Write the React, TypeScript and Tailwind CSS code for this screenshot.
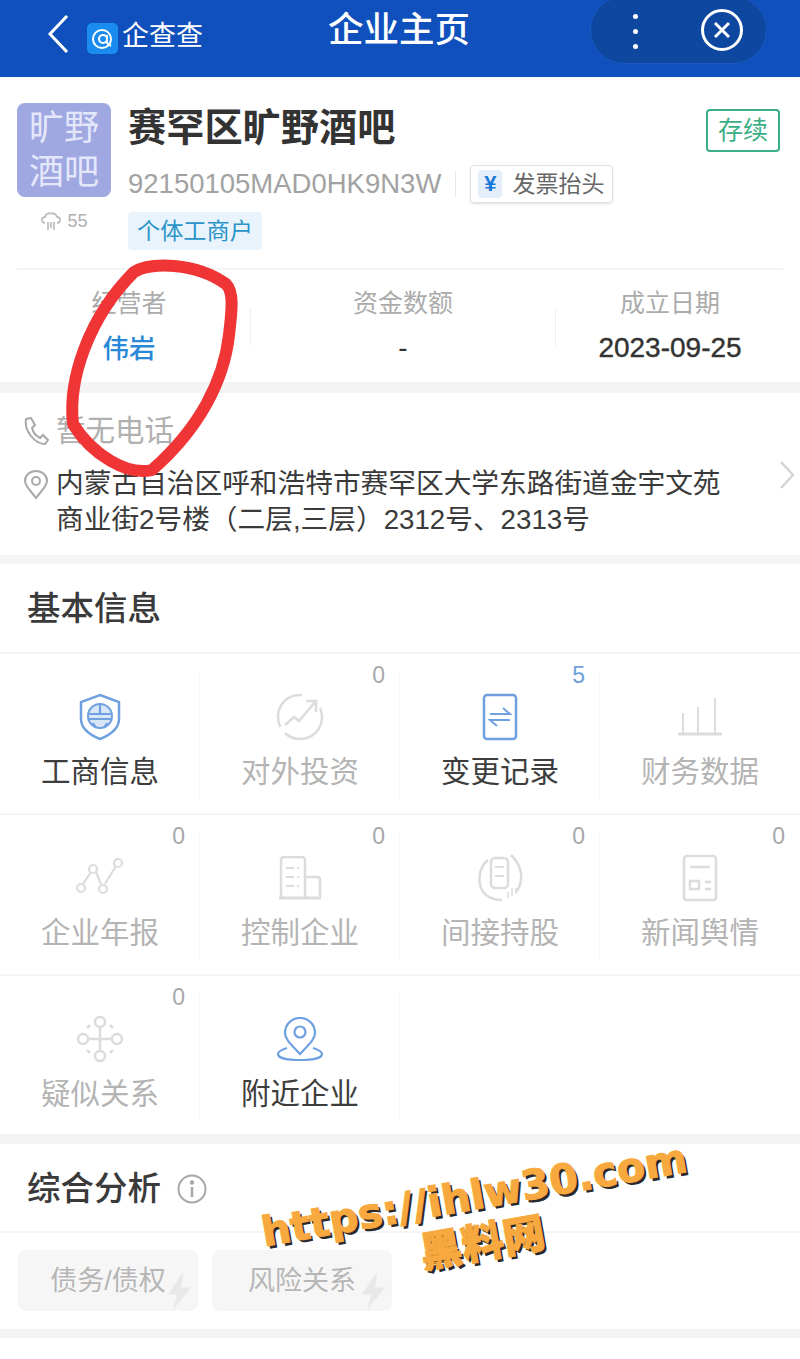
import { ReactNode } from 'react';

const FONT = "font-['Liberation_Sans','Noto_Sans_CJK_SC',sans-serif]";

function ShieldIcon() {
  return (
    <svg width="44" height="48" viewBox="0 0 44 48" fill="none" stroke="#6fa0e0" strokeWidth="2.5">
      <path d="M22 2 L41 9 V26 C41 36 32 42 22 46 C12 42 3 36 3 26 V9 Z" />
      <circle cx="22" cy="23" r="12" fill="#d8e6f8" strokeWidth="2" />
      <path d="M10 21 H34 M10 26 H34 M22 11 V21 M15 30 L18 35 M29 30 L26 35" strokeWidth="2.2" />
    </svg>
  );
}

function InvestIcon() {
  return (
    <svg width="48" height="48" viewBox="0 0 48 48" fill="none" stroke="#dcdcdc" strokeWidth="2.5">
      <path d="M26 2 C12 1 2 11 2 24 C2 28 3 31 4 34" />
      <path d="M44 15 C46 19 46 21 46 24 C46 37 36 46 24 46 C18 46 13 44 9 40" />
      <path d="M9 32 L18 24 L23 28 L39 9 M30 8 H40 V19" />
    </svg>
  );
}

function ChangeIcon() {
  return (
    <svg width="36" height="48" viewBox="0 0 36 48" fill="none" stroke="#6fa0e0" strokeWidth="2.5">
      <rect x="2" y="2" width="32" height="44" rx="3" />
      <path d="M8 21 H28 L21 15 M28 27 H8 L15 33" strokeWidth="2" />
    </svg>
  );
}

function FinanceIcon() {
  return (
    <svg width="46" height="40" viewBox="0 0 46 40" fill="none" stroke="#dcdcdc" strokeWidth="2">
      <path d="M1 37 H45" strokeWidth="3" />
      <path d="M6 36 V16 M21 36 V10 M38 36 V1" />
    </svg>
  );
}

function ReportIcon() {
  return (
    <svg width="48" height="40" viewBox="0 0 48 40" fill="none" stroke="#dcdcdc" strokeWidth="2.2">
      <path d="M7 26 L15 14 M20 14 L25 26 M29 26 L40 8" />
      <circle cx="5" cy="30" r="4" />
      <circle cx="17" cy="11" r="4" />
      <circle cx="27" cy="31" r="4" />
      <circle cx="42" cy="5" r="4" />
    </svg>
  );
}

function BuildingIcon() {
  return (
    <svg width="44" height="44" viewBox="0 0 44 44" fill="none" stroke="#dcdcdc" strokeWidth="2.5">
      <path d="M1 42 H43" strokeWidth="3" />
      <path d="M3 42 V4 Q3 1 6 1 H24 Q27 1 27 4 V42 M27 21 H39 Q42 21 42 24 V42" />
      <path d="M8 12 H16 M8 21 H16 M8 30 H16 M19 12 H21 M19 21 H21 M19 30 H21" strokeWidth="2" />
    </svg>
  );
}

function HoldingIcon() {
  return (
    <svg width="46" height="48" viewBox="0 0 46 48" fill="none" stroke="#dcdcdc" strokeWidth="2.5">
      <path d="M11 6 C1 14 -1 32 9 41 C14 45 20 46 25 46" />
      <path d="M34 1 C46 12 47 28 39 38" />
      <rect x="14" y="4" width="17" height="30" rx="4" />
      <path d="M18 13 H27 M18 22 H27" strokeWidth="2" />
      <path d="M31 44 V38 M35 42 V34 M39 40 V34" strokeWidth="1.5" />
    </svg>
  );
}

function NewsIcon() {
  return (
    <svg width="36" height="48" viewBox="0 0 36 48" fill="none" stroke="#dcdcdc" strokeWidth="2.5">
      <rect x="2" y="2" width="32" height="44" rx="3" />
      <path d="M8 13 H28 M23 28 H29 M23 35 H29" />
      <rect x="8" y="27" width="9" height="8" />
    </svg>
  );
}

function RelationIcon() {
  return (
    <svg width="46" height="46" viewBox="0 0 46 46" fill="none" stroke="#dcdcdc" strokeWidth="2.5">
      <circle cx="23" cy="6" r="5" />
      <circle cx="23" cy="40" r="5" />
      <circle cx="6" cy="23" r="5" />
      <circle cx="40" cy="23" r="5" />
      <path d="M23 11 V35 M11 23 H35" />
      <path d="M10 12 L13 9 M33 9 L36 12 M10 34 L13 37 M33 37 L36 34" />
    </svg>
  );
}

function NearbyIcon() {
  return (
    <svg width="46" height="44" viewBox="0 0 46 44" fill="none" stroke="#6fa0e0" strokeWidth="2.2">
      <path d="M23 37 C16 29 8 23 8 16 C8 7 15 1 23 1 C31 1 38 7 38 16 C38 23 30 29 23 37 Z" />
      <circle cx="23" cy="15" r="5.5" />
      <path d="M10 31 C4 33 1 35 1 37 C1 41 11 43 23 43 C35 43 45 41 45 37 C45 35 42 33 36 31" />
    </svg>
  );
}

const tiles: { label: string; count?: number; active?: boolean; icon: ReactNode }[] = [
  { label: '工商信息', active: true, icon: <ShieldIcon /> },
  { label: '对外投资', count: 0, icon: <InvestIcon /> },
  { label: '变更记录', count: 5, active: true, icon: <ChangeIcon /> },
  { label: '财务数据', icon: <FinanceIcon /> },
  { label: '企业年报', count: 0, icon: <ReportIcon /> },
  { label: '控制企业', count: 0, icon: <BuildingIcon /> },
  { label: '间接持股', count: 0, icon: <HoldingIcon /> },
  { label: '新闻舆情', count: 0, icon: <NewsIcon /> },
  { label: '疑似关系', count: 0, icon: <RelationIcon /> },
  { label: '附近企业', active: true, icon: <NearbyIcon /> },
];

function Tile({ label, count, active, icon, divider }: (typeof tiles)[number] & { divider: boolean }) {
  return (
    <div className="relative h-[160.8px] border-t-2 border-[#f5f5f5]">
      {divider && <div className="absolute right-0 top-[18px] h-[128px] w-px bg-[#f6f6f6]" />}
      {count !== undefined && (
        <span className={`absolute right-[15px] top-[9px] text-[23px] leading-6 ${count > 0 ? 'text-[#6f9fd8]' : 'text-[#a8a8a8]'}`}>
          {count}
        </span>
      )}
      <div className="mt-[38px] flex h-[50px] items-center justify-center">{icon}</div>
      <div className={`mt-[10px] text-center text-[29.5px] leading-[40px] ${active ? 'text-[#3d3d3d]' : 'text-[#b4b4b4]'}`}>
        {label}
      </div>
    </div>
  );
}

function Band({ h }: { h: string }) {
  return <div className={`${h} bg-[#f4f4f4]`} />;
}

function Chip({ label }: { label: string }) {
  return (
    <div className="relative flex h-[61px] w-[180px] items-center justify-center overflow-hidden rounded-lg bg-[#f6f6f6] text-[27px] text-[#b6b6b6]">
      {label}
      <svg className="absolute right-[6px] top-[19px]" width="26" height="44" viewBox="0 0 30 44" fill="#e8e8e8">
        <path d="M20 0 L2 26 H13 L8 44 L29 18 H17 Z" />
      </svg>
    </div>
  );
}

export default function App() {
  return (
    <div className={`relative h-[1359px] w-[800px] overflow-hidden bg-white ${FONT}`}>
      {/* Top bar */}
      <div className="relative flex h-[77px] items-center bg-[#0f50bd]">
        <svg className="mb-[10px] ml-[47px]" width="22" height="38" viewBox="0 0 22 38" fill="none" stroke="#fff" strokeWidth="3">
          <path d="M20 1 L3 19 L20 37" />
        </svg>
        <svg className="mb-[1px] ml-[18px]" width="31" height="31" viewBox="0 0 31 31" fill="none">
          <rect width="31" height="31" rx="5" fill="#1a8cf0" />
          <circle cx="15" cy="16" r="9" stroke="#fff" strokeWidth="2" />
          <circle cx="16" cy="16" r="4" stroke="#fff" strokeWidth="2" />
          <path d="M20 12 V20 L24 23" stroke="#fff" strokeWidth="2" />
        </svg>
        <span className="ml-[4px] mb-[4px] text-[27px] leading-none text-white">企查查</span>
        <span className="absolute left-[328px] top-[8px] text-[35.5px] font-medium leading-[44px] text-white">企业主页</span>
        <div className="absolute right-[33px] top-[-4px] flex h-[68px] w-[177px] items-center rounded-[34px] border border-[#1a59c0] bg-[#0d479f]">
          <div className="ml-[42px] mt-[2px] flex flex-col gap-[10px]">
            <span className="h-[5px] w-[5px] rounded-full bg-white" />
            <span className="h-[5px] w-[5px] rounded-full bg-white" />
            <span className="h-[5px] w-[5px] rounded-full bg-white" />
          </div>
          <svg className="ml-[62px]" width="44" height="44" viewBox="0 0 44 44" fill="none" stroke="#fff" strokeWidth="3">
            <circle cx="22" cy="22" r="19.5" />
            <path d="M15 15 L29 29 M29 15 L15 29" />
          </svg>
        </div>
      </div>

      {/* Company card */}
      <div className="relative h-[305px]">
        <div className="flex pl-[17px] pt-[26px]">
          <div className="w-[94px]">
            <div className="flex h-[94px] w-[94px] items-center justify-center rounded-lg bg-[#a0a8e2] text-center text-[35px] leading-[44px] text-[#e4e7fa]">
              旷野<br />酒吧
            </div>
            <div className="mt-[12px] flex items-center justify-center gap-[5px] text-[18px] leading-6 text-[#b0b0b0]">
              <svg width="22" height="22" viewBox="0 0 22 22" fill="none" stroke="#c0c0c0" strokeWidth="1.8">
                <path d="M5 13 C1 13 1 7 5 7 C6 2 16 2 17 7 C21 7 21 13 17 13 M8 12 V20 M11 12 V18 M14 12 V20" />
              </svg>
              55
            </div>
          </div>
          <div className="ml-[17px]">
            <div className="text-[38.2px] font-bold leading-[50px] text-[#333333]">赛罕区旷野酒吧</div>
            <div className="mt-[12px] flex h-[38px] items-center">
              <span className="text-[27.5px] leading-none text-[#a2a2a2]">92150105MAD0HK9N3W</span>
              <span className="ml-[14px] h-[26px] w-px bg-[#e6e6e6]" />
              <div className="ml-[14px] flex h-[38px] w-[143px] items-center rounded border border-[#dde3ea] pl-[7px] shadow-sm">
                <span className="flex h-[28px] w-[24px] items-center justify-center rounded-sm bg-[#e3eefa] text-[22px] font-bold leading-none text-[#1a78d8]">¥</span>
                <span className="ml-[10px] text-[23px] leading-none text-[#666666]">发票抬头</span>
              </div>
            </div>
            <div className="mt-[9px] inline-flex h-[38px] items-center rounded bg-[#e8f3fc] px-[9px] text-[23.2px] text-[#2a94c8]">
              个体工商户
            </div>
          </div>
        </div>
        <div className="absolute right-[20px] top-[32px] flex h-[43px] w-[74px] items-center justify-center rounded border-2 border-[#3aaf85] text-[25px] text-[#3aaf85]">
          存续
        </div>
        {/* Stats */}
        <div className="absolute left-0 right-0 top-[191px] grid h-[114px] grid-cols-[250px_306px_244px]">
          <div className="absolute left-[17px] right-[17px] top-0 h-[2px] bg-[#f4f4f4]" />
          <div className="flex flex-col items-center pl-[8px] pt-[17px]">
            <span className="text-[25px] leading-[36px] text-[#ababab]">经营者</span>
            <span className="mt-[10px] text-[26.5px] font-medium leading-[36px] text-[#2a88d8]">伟岩</span>
          </div>
          <div className="relative flex flex-col items-center pt-[17px]">
            <div className="absolute left-0 top-[40px] h-[38px] w-px bg-[#efefef]" />
            <div className="absolute right-0 top-[40px] h-[38px] w-px bg-[#efefef]" />
            <span className="text-[25px] leading-[36px] text-[#ababab]">资金数额</span>
            <span className="mt-[9px] text-[28px] font-medium leading-[36px] text-[#333333]">-</span>
          </div>
          <div className="flex flex-col items-center pr-[16px] pt-[17px]">
            <span className="text-[25px] leading-[36px] text-[#ababab]">成立日期</span>
            <span className="mt-[9px] text-[28px] leading-[36px] text-[#333333] [-webkit-text-stroke:0.4px_#333333]">2023-09-25</span>
          </div>
        </div>
      </div>
      <Band h="h-[11px]" />

      {/* Contact */}
      <div className="relative h-[162px] pl-[23px]">
        <div className="flex h-[73px] items-center pt-[2px]">
          <svg width="26" height="28" viewBox="0 0 26 28" fill="none" stroke="#a8a8a8" strokeWidth="2">
            <path d="M3 2 L8 1 L12 8 L9 11 C10 15 13 19 17 21 L20 18 L25 23 L22 27 C12 27 1 14 3 2 Z" />
          </svg>
          <span className="ml-[7px] text-[29.5px] leading-none text-[#b0b0b0]">暂无电话</span>
        </div>
        <div className="flex">
          <svg className="mt-[4px] shrink-0" width="26" height="30" viewBox="0 0 26 30" fill="none" stroke="#a8a8a8" strokeWidth="2">
            <path d="M13 28 C7 20 2 16 2 11 C2 5 7 1 13 1 C19 1 24 5 24 11 C24 16 19 20 13 28 Z" />
            <circle cx="13" cy="11" r="4" />
          </svg>
          <div className="ml-[7px] w-[680px] text-[27.7px] leading-[36px] text-[#3a3a3a]">
            内蒙古自治区呼和浩特市赛罕区大学东路街道金宇文苑
            <br />
            商业街2号楼（二层,三层）2312号、2313号
          </div>
        </div>
        <svg className="absolute right-[5px] top-[68px]" width="16" height="28" viewBox="0 0 16 28" fill="none" stroke="#d4d4d4" strokeWidth="2.5">
          <path d="M2 1 L14 14 L2 27" />
        </svg>
      </div>
      <Band h="h-[9px]" />

      {/* Basic info */}
      <div className="flex h-[88px] items-center pl-[27px] pt-[2px] text-[33.5px] font-medium leading-none text-[#3a3a3a]">基本信息</div>
      <div className="grid grid-cols-4">
        {tiles.map((tile, i) => (
          <Tile key={tile.label} {...tile} divider={i % 4 !== 3} />
        ))}
        <div className="col-span-2 border-t-2 border-[#f5f5f5]" />
      </div>
      <Band h="h-[10px]" />

      {/* Analysis */}
      <div className="flex h-[87px] items-center pl-[27px] pt-[2px] text-[33.5px] font-medium leading-none text-[#3a3a3a]">
        综合分析
        <svg className="ml-[16px]" width="30" height="30" viewBox="0 0 30 30" fill="none" stroke="#a8a8a8" strokeWidth="2">
          <circle cx="15" cy="15" r="13.5" />
          <path d="M15 13 V23" strokeWidth="2.5" />
          <circle cx="15" cy="8.5" r="1.2" fill="#a8a8a8" />
        </svg>
      </div>
      <div className="flex h-[98px] gap-[14px] border-t-2 border-[#f5f5f5] pl-[18px] pt-[17px]">
        <Chip label="债务/债权" />
        <Chip label="风险关系" />
      </div>
      <Band h="h-[9px]" />

      {/* Hand-drawn circle on top of the screenshot */}
      <svg className="pointer-events-none absolute left-0 top-0" width="800" height="500" viewBox="0 0 800 500" fill="none">
        <path
          d="M134 272 C150 262 195 262 226 284 C234 292 232 310 229 335 C224 380 200 428 152 470 C128 476 92 455 73 424 C68 380 88 318 134 272 Z"
          stroke="#ef3535"
          strokeWidth="12"
          strokeLinejoin="round"
        />
      </svg>

      {/* Watermark */}
      <div className="absolute left-[238px] top-[1172px] w-[480px] origin-center -rotate-[10deg] text-center font-['DejaVu_Sans','Noto_Sans_CJK_SC',sans-serif] font-bold leading-none text-[#f7a83e] [-webkit-text-stroke:1px_#f7a83e] [text-shadow:2px_3px_0_#2a2a2a]">
        <div className="text-[41px] leading-[46px]">https://ihlw30.com</div>
        <div className="font-['Noto_Sans_CJK_SC',sans-serif] text-[42px] font-black leading-[44px]">黑料网</div>
      </div>
    </div>
  );
}
